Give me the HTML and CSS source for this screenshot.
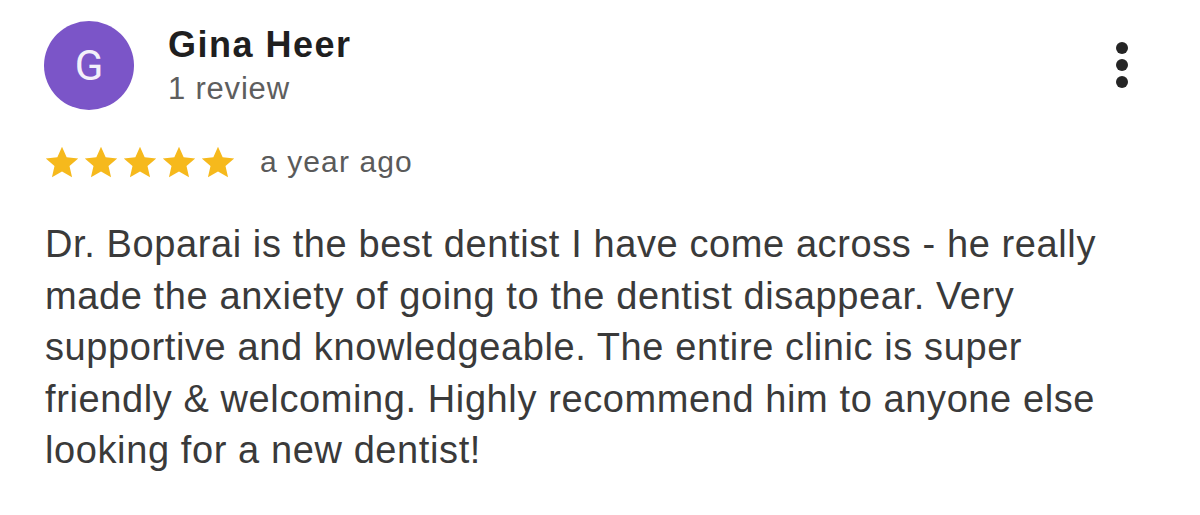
FILE: index.html
```html
<!DOCTYPE html>
<html>
<head>
<meta charset="utf-8">
<link rel="stylesheet" href="styles.css">
</head>
<body>
<div class="review">
  <div class="header">
    <div class="avatar">G</div>
    <div class="who">
      <div class="name">Gina Heer</div>
      <div class="count">1 review</div>
    </div>
    <div class="more"><span></span><span></span><span></span></div>
  </div>
  <div class="meta">
    <div class="stars">
      <svg viewBox="0 0 24 24"><path d="M12 1.8l3.1 7.1 7.7.7-5.8 5.1 1.7 7.5L12 18.3l-6.7 3.9L7 14.7 1.2 9.6l7.7-.7z"/></svg>
      <svg viewBox="0 0 24 24"><path d="M12 1.8l3.1 7.1 7.7.7-5.8 5.1 1.7 7.5L12 18.3l-6.7 3.9L7 14.7 1.2 9.6l7.7-.7z"/></svg>
      <svg viewBox="0 0 24 24"><path d="M12 1.8l3.1 7.1 7.7.7-5.8 5.1 1.7 7.5L12 18.3l-6.7 3.9L7 14.7 1.2 9.6l7.7-.7z"/></svg>
      <svg viewBox="0 0 24 24"><path d="M12 1.8l3.1 7.1 7.7.7-5.8 5.1 1.7 7.5L12 18.3l-6.7 3.9L7 14.7 1.2 9.6l7.7-.7z"/></svg>
      <svg viewBox="0 0 24 24"><path d="M12 1.8l3.1 7.1 7.7.7-5.8 5.1 1.7 7.5L12 18.3l-6.7 3.9L7 14.7 1.2 9.6l7.7-.7z"/></svg>
    </div>
    <span class="when">a year ago</span>
  </div>
  <p class="text">Dr. Boparai is the best dentist I have come across - he really made the anxiety of going to the dentist disappear. Very supportive and knowledgeable. The entire clinic is super friendly &amp; welcoming. Highly recommend him to anyone else looking for a new dentist!</p>
</div>
</body>
</html>
```
FILE: styles.css
```css
html, body {
  margin: 0;
  padding: 0;
  background: #ffffff;
}
body {
  font-family: "Liberation Sans", Arial, sans-serif;
  width: 1200px;
  height: 515px;
  overflow: hidden;
}
.review {
  padding: 21px 0 0 44px;
}
.header {
  display: flex;
  align-items: flex-start;
}
.avatar {
  width: 90px;
  height: 89px;
  border-radius: 50%;
  background: #7b55c8;
  color: #f3f0fa;
  font-family: Roboto, "Liberation Sans", sans-serif;
  font-size: 42px;
  display: flex;
  align-items: center;
  justify-content: center;
  flex: none;
}
.who {
  margin-left: 34px;
  padding-top: 6px;
}
.name {
  font-size: 36px;
  font-weight: bold;
  letter-spacing: 1.5px;
  color: #1f1f1f;
  line-height: 36px;
}
.count {
  font-size: 31px;
  letter-spacing: 0.8px;
  color: #5e5e5e;
  line-height: 40px;
  margin-top: 6px;
}
.more {
  margin-left: auto;
  margin-right: 72px;
  margin-top: 21px;
  display: flex;
  flex-direction: column;
  gap: 5px;
}
.more span {
  width: 12px;
  height: 12px;
  border-radius: 50%;
  background: #252525;
}
.meta {
  display: flex;
  align-items: center;
  margin-top: 34px;
  height: 36px;
}
.stars {
  display: flex;
  gap: 3px;
}
.stars svg {
  width: 36px;
  height: 36px;
  fill: #f6b91c;
}
.when {
  margin-left: 24px;
  font-size: 30px;
  letter-spacing: 1.1px;
  color: #5a5a5a;
}
.text {
  margin: 39px 0 0 1px;
  width: 1090px;
  font-size: 38px;
  letter-spacing: 0.6px;
  line-height: 51.5px;
  color: #3a3a3a;
}
```
